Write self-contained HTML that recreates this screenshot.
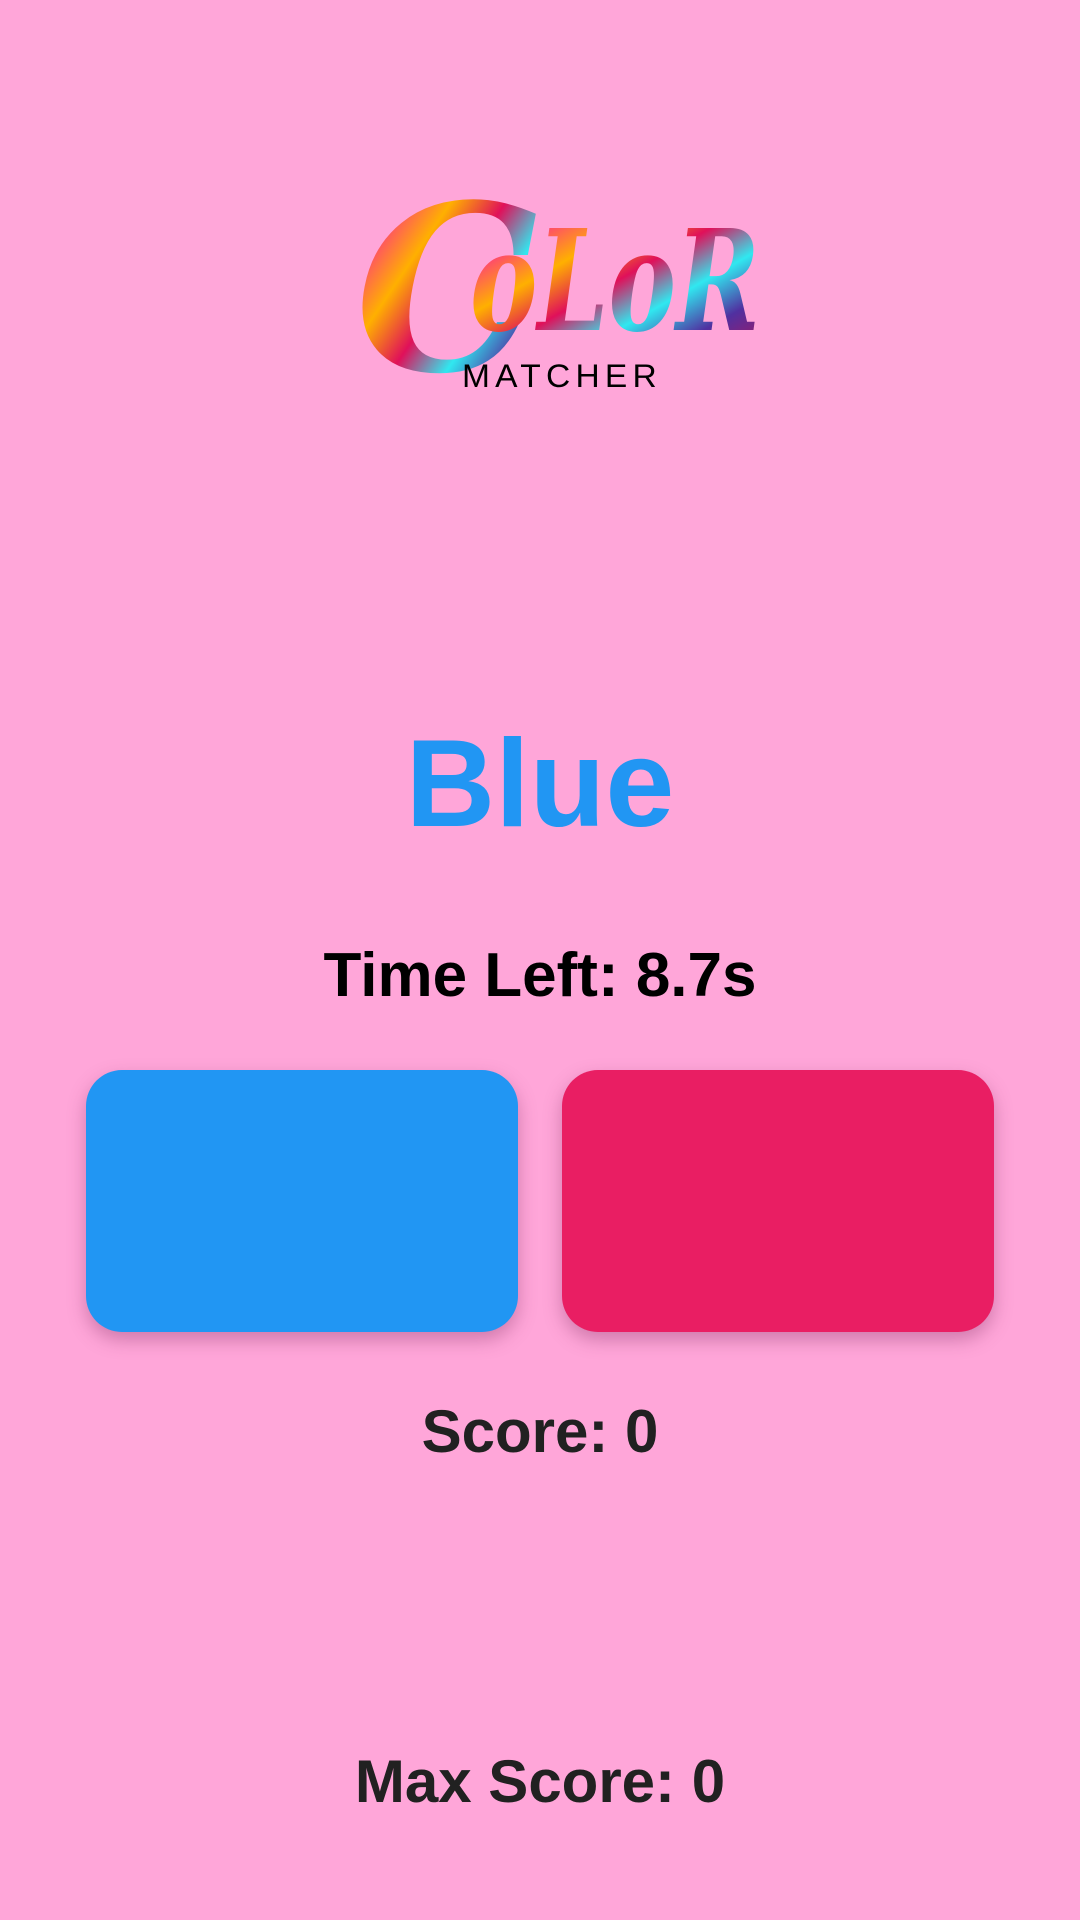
<!DOCTYPE html>
<html><head><meta charset="utf-8"><style>
html,body{margin:0;padding:0}
body{width:1080px;height:1920px;background:#FFA6D9;position:relative;overflow:hidden;font-family:"Liberation Sans",sans-serif;font-weight:bold}
.t{position:absolute;left:0;width:1080px;text-align:center;line-height:1}
.btn{position:absolute;top:1070px;width:432px;height:262px;border-radius:36px;box-shadow:0 8px 18px rgba(120,40,90,0.35)}
</style></head><body>
<svg style="position:absolute;left:350px;top:165px" width="420" height="230" viewBox="0 0 420 230">
<defs>
<linearGradient id="g" x1="0" y1="0" x2="1" y2="1">
<stop offset="0" stop-color="#7a1060"/><stop offset="0.2" stop-color="#ff3d7a"/><stop offset="0.35" stop-color="#ffb000"/><stop offset="0.5" stop-color="#e0105a"/><stop offset="0.65" stop-color="#30e8f0"/><stop offset="0.8" stop-color="#5030a0"/><stop offset="1" stop-color="#c01050"/>
</linearGradient>
</defs>
<text x="5" y="205" font-family="DejaVu Serif,serif" font-style="italic" font-weight="bold" font-size="230" fill="url(#g)">C</text>
<text x="120" y="165" font-family="DejaVu Serif,serif" font-style="italic" font-weight="bold" font-size="140" fill="url(#g)" textLength="290" lengthAdjust="spacingAndGlyphs">oLoR</text>
<text x="212" y="222" text-anchor="middle" font-family="Liberation Sans,sans-serif" font-weight="normal" font-size="32" letter-spacing="5" fill="#000" textLength="200" lengthAdjust="spacingAndGlyphs">MATCHER</text>
</svg>
<div class="t" style="top:722px;font-size:124px;color:#2196F3">Blue</div>
<div class="t" style="top:945px;font-size:62px;color:#000">Time Left: 8.7s</div>
<div class="btn" style="left:86px;background:#2196F3"></div>
<div class="btn" style="left:562px;background:#E91E63"></div>
<div class="t" style="top:1402px;font-size:60px;color:#212121">Score: 0</div>
<div class="t" style="top:1752px;font-size:60px;color:#212121">Max Score: 0</div>
</body></html>
